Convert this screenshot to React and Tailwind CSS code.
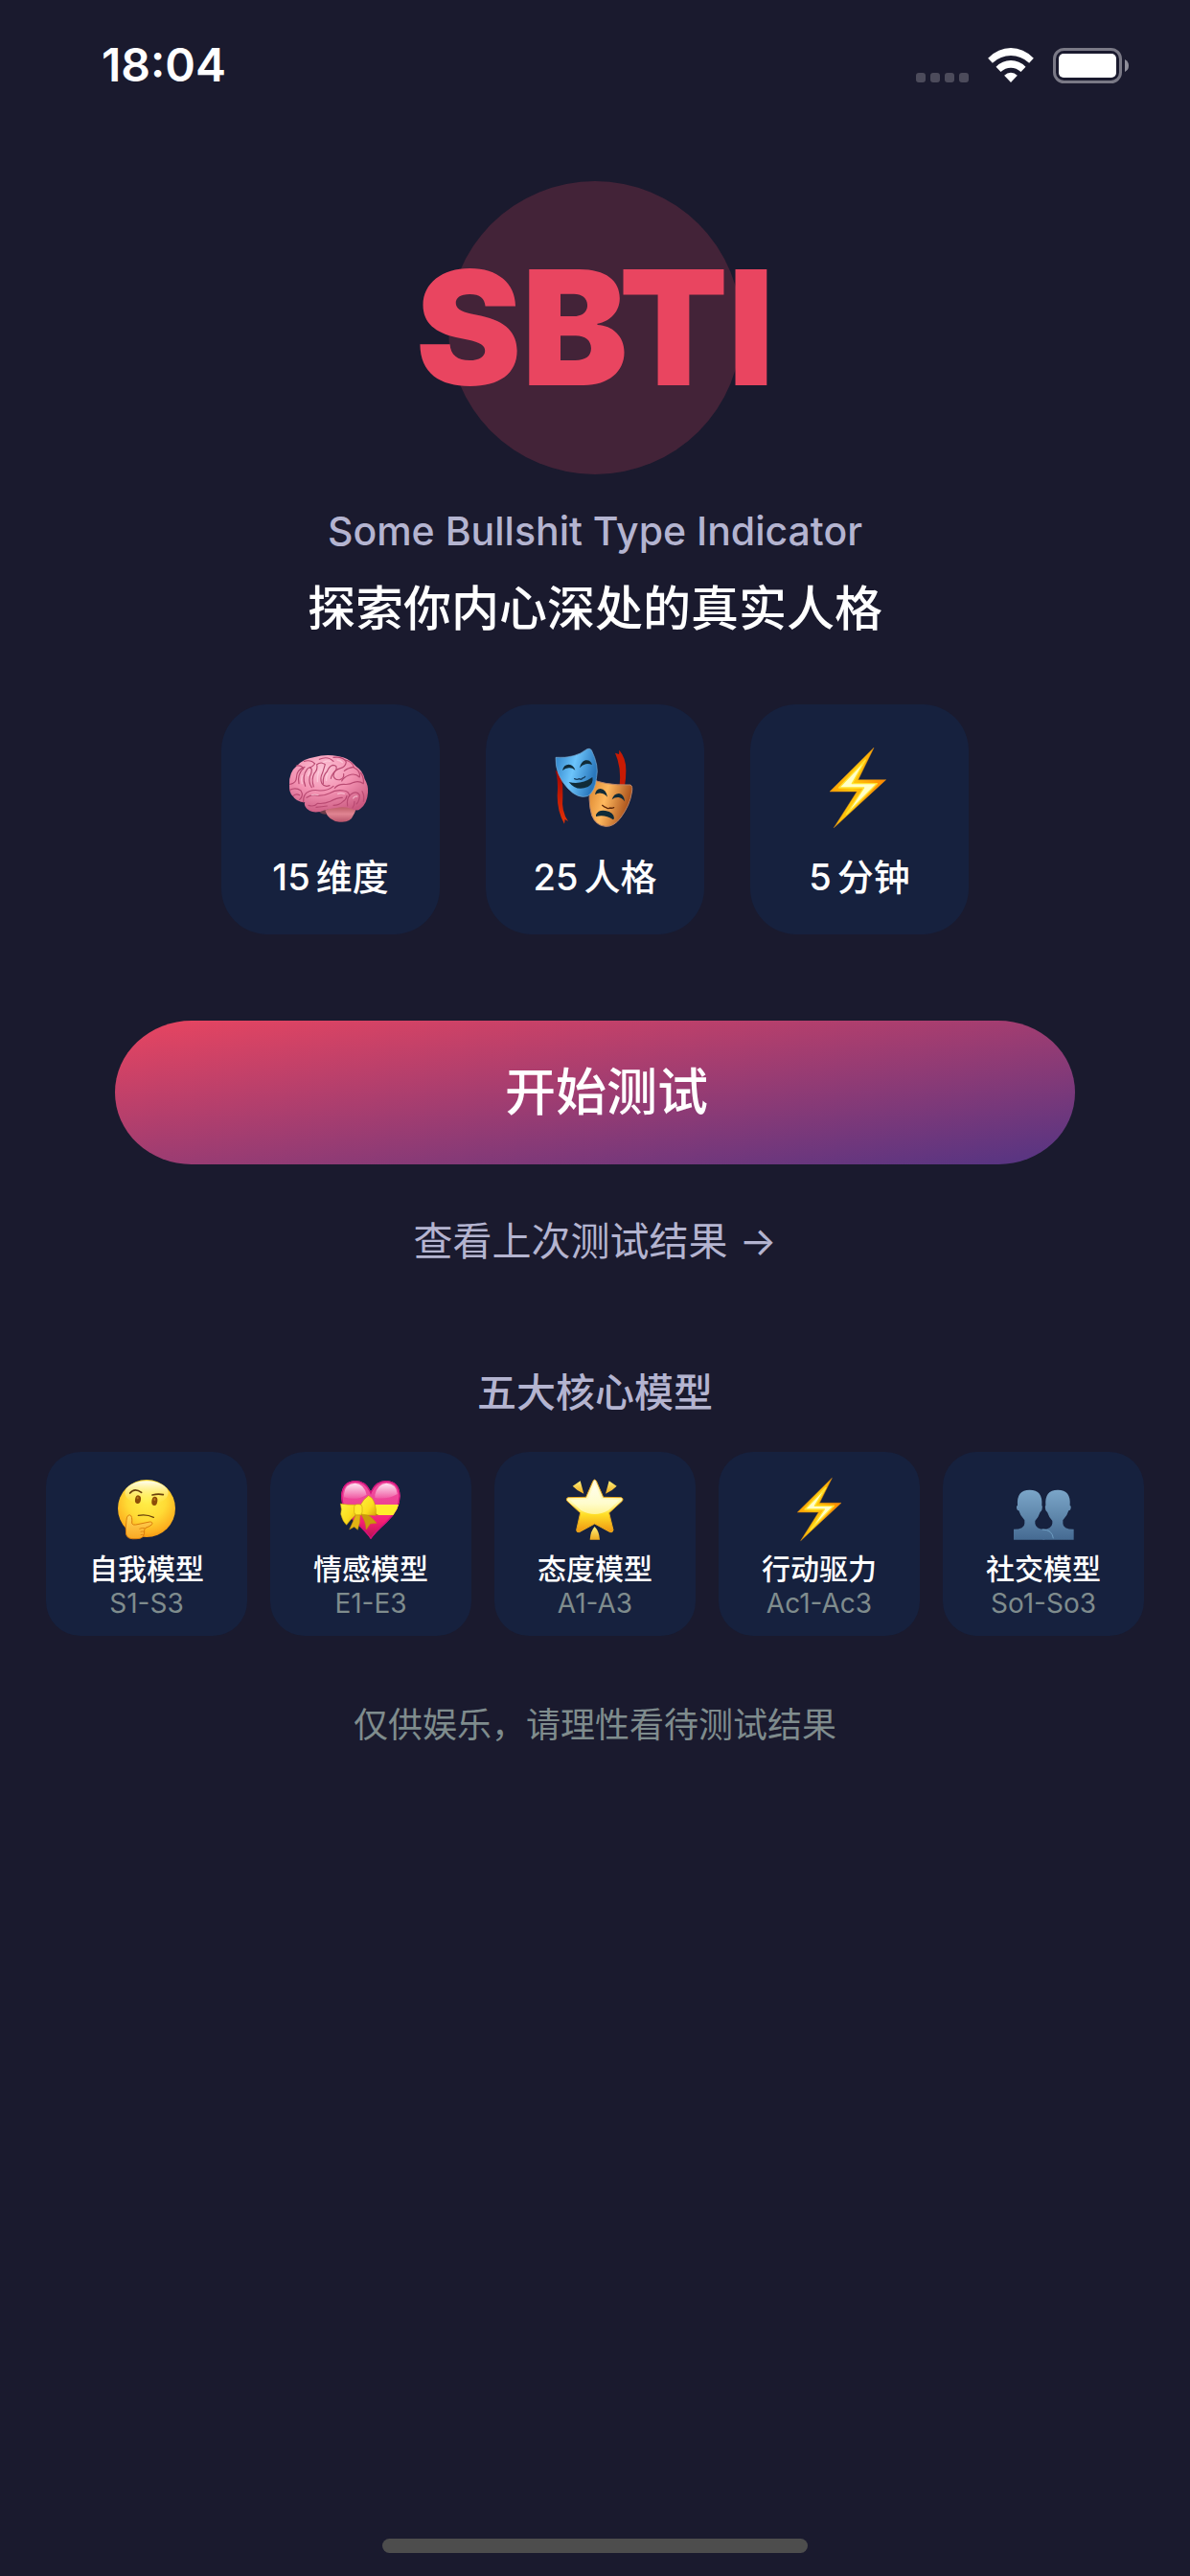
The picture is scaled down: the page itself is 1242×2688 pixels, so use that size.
const font = "font-['Inter','Noto_Sans_CJK_SC',sans-serif]";

function BrainIcon() {
  return (
    <svg viewBox="231 168 288 288" className="size-24" aria-hidden="true">
      <defs>
        <radialGradient id="brainBody" cx="0.42" cy="0.25" r="0.8">
          <stop offset="0" stopColor="#fcc3d6" />
          <stop offset="0.5" stopColor="#f392b2" />
          <stop offset="1" stopColor="#c9587f" />
        </radialGradient>
        <linearGradient id="brainStem" x1="0" y1="0" x2="0" y2="1">
          <stop offset="0" stopColor="#b6565f" />
          <stop offset="0.5" stopColor="#e08492" />
          <stop offset="1" stopColor="#b8546b" />
        </linearGradient>
      </defs>
      <path d="M340 386q16 10 28 4l14 -10l-20 -8z" fill="#6d3b48" />
      <path d="M358 380q10 32 45 36q34 4 44 -22q8 -14 6 -20q-50 -18 -86 2z" fill="url(#brainStem)" />
      <path d="M246 300q-2 -40 24 -60q20 -22 55 -27q34 -10 72 -3q36 4 58 32q22 14 27 40q12 20 10 42q-2 34 -23 50q-10 10 -26 2q-24 -10 -50 -4q-32 4 -50 12q-34 6 -46 -14q-6 -10 -2 -15q-28 -2 -38 -20q-12 -8 -11 -35z" fill="url(#brainBody)" />
      <g fill="none" stroke="#b94a72" strokeWidth="3.5" strokeLinecap="round" strokeLinejoin="round">
        <path d="M248 298q20 -4 20 -20q0 -26 26 -34" />
        <path d="M268 240q18 -2 22 10M292 226q22 -6 34 8q-8 10 -16 12" />
        <path d="M276 296q-6 -28 14 -48M296 304q-12 -30 6 -54q10 -10 14 2q0 14 -6 22q-4 20 6 34" />
        <path d="M322 306q-8 -24 2 -42q12 -12 8 -28q14 -10 26 0q-4 14 -8 26q-10 20 -2 34q8 12 24 6" />
        <path d="M352 296q-2 -24 12 -38q6 -16 18 -20q16 0 10 16q-14 14 -16 26" />
        <path d="M340 220q26 -12 44 6M384 214q30 -4 40 14q-2 16 -18 20q-22 6 -22 24q4 14 20 12q14 -4 12 -18" />
        <path d="M420 222q22 4 28 22q-18 2 -30 12M448 246q22 10 18 30q-14 -14 -34 -6q-16 6 -22 18" />
        <path d="M470 262q10 16 8 34q-14 -10 -30 -4q-14 8 -32 6q-18 0 -28 12" />
        <path d="M248 316q18 -10 34 2q10 16 -4 28M258 334q10 -8 20 -2M290 354q-2 -26 18 -34q16 -6 34 -2q26 0 42 -14" />
        <path d="M300 340q16 -12 36 -6q20 0 36 -8q20 -12 44 -8q18 2 18 18" />
        <path d="M306 364q18 6 28 -6q22 2 40 -6q20 -12 38 -12M330 370q18 -2 34 -4M384 364q18 0 30 -12q10 -6 12 -18" />
        <path d="M428 366q-4 -24 10 -36q18 -14 28 2q0 18 -10 28M444 372q6 -8 6 -20M474 320q8 14 4 32" />
      </g>
      <g fill="none" stroke="#ffdbe6" strokeWidth="4" strokeLinecap="round" opacity="0.6">
        <path d="M286 272q-4 14 0 24M309 258q-4 6 -5 14M338 258q-6 16 -4 32M366 264q-6 12 -4 22M396 222q12 2 16 8M352 230q10 -8 22 -4M316 332q10 -3 20 0M398 328q10 -4 20 0M446 342q4 -8 12 -6" />
      </g>
    </svg>
  );
}

function MasksIcon() {
  return (
    <svg viewBox="1059 168 288 288" className="size-24" aria-hidden="true">
      <defs>
        <linearGradient id="maskBlue" x1="0" y1="0" x2="1" y2="0.3">
          <stop offset="0" stopColor="#2b7ec4" />
          <stop offset="0.5" stopColor="#6cc4fb" />
          <stop offset="1" stopColor="#2a78bd" />
        </linearGradient>
        <linearGradient id="maskOrange" x1="0" y1="0" x2="1" y2="0.3">
          <stop offset="0" stopColor="#d9822b" />
          <stop offset="0.45" stopColor="#ffb95e" />
          <stop offset="1" stopColor="#a9501a" />
        </linearGradient>
        <linearGradient id="maskRibbon" x1="0" y1="0" x2="0" y2="1">
          <stop offset="0" stopColor="#9d0503" />
          <stop offset="1" stopColor="#e63206" />
        </linearGradient>
      </defs>
      <path d="M1079 254q10 30 6 80q0 50 22 88l2 -14l10 6q-22 -32 -17 -76q2 -36 -6 -70z" fill="url(#maskRibbon)" />
      <path d="M1280 304q6 -60 -14 -104l12 4l1 -13q22 26 21 64q0 26 -4 50z" fill="#c81b04" />
      <path d="M1190 280q40 22 124 20q8 4 4 24q-6 40 -34 78q-22 30 -48 28q-30 -2 -43 -34q-14 -46 -3 -116z" fill="url(#maskOrange)" stroke="#b98368" strokeWidth="3" />
      <path d="M1080 214q60 4 98 -26q8 -4 14 3q24 50 16 84q-4 46 -28 60q-30 10 -62 -24q-40 -42 -38 -97z" fill="url(#maskBlue)" stroke="#79aed6" strokeWidth="2" />
      <g fill="#102b38">
        <path d="M1101 255q4 -19 20 -19q15 1 20 18q-11 -9 -20 -7q-11 1 -20 8zM1155 247q4 -20 18 -24q16 -3 21 14q-12 -5 -20 -2q-12 3 -19 12z" />
        <path d="M1121 291q38 10 74 -15q4 20 -14 30q-36 16 -60 -15z" />
        <path d="M1203 331q2 -18 17 -19q18 2 22 26q-10 -12 -21 -12q-10 -1 -18 5zM1256 346q6 -19 22 -19q16 2 18 25q-9 -12 -19 -13q-12 -1 -21 7z" />
        <path d="M1206 393q8 -16 30 -12q26 4 27 24l-3 4q-26 -18 -54 -10z" />
      </g>
      <g fill="none" strokeLinecap="round" strokeWidth="4">
        <path d="M1139 281q8 4 14 0q8 4 11 -2q6 0 8 -5" stroke="#153c5d" />
        <path d="M1226 364q6 6 12 7q6 5 12 1q6 2 12 -1" stroke="#5c2709" />
      </g>
    </svg>
  );
}

function BoltIcon({ viewBox, className, points, inner, id }) {
  return (
    <svg viewBox={viewBox} className={className} aria-hidden="true">
      <defs>
        <linearGradient id={id} x1="0" y1="0" x2="1" y2="0.25">
          <stop offset="0" stopColor="#ff9300" />
          <stop offset="0.5" stopColor="#ffc70a" />
          <stop offset="1" stopColor="#ff8a00" />
        </linearGradient>
      </defs>
      <polygon points={points} fill={`url(#${id})`} stroke="#d98a18" strokeWidth="1.5" strokeLinejoin="round" />
      <polygon points={inner} fill="#ffffc8" stroke="#ffe22e" strokeWidth="4" strokeLinejoin="round" />
    </svg>
  );
}

function LargeBolt() {
  return (
    <BoltIcon
      id="boltLarge"
      viewBox="687 168 288 288"
      className="size-24"
      points="876,184 738,321 823,321 751,434 914,284 827,284"
      inner="850,222 767,309 845,309 790,392 886,296 808,296"
    />
  );
}

function SmallBolt() {
  return (
    <BoltIcon
      id="boltSmall"
      viewBox="237 120 216 216"
      className="size-[72px]"
      points="385,130 277,237 343,237 287,326 414,208 346,208"
      inner="366,160 300,228 361,228 318,292 391,217 331,217"
    />
  );
}

function ThinkingIcon() {
  return (
    <svg viewBox="261 420 216 216" className="size-[72px]" aria-hidden="true">
      <defs>
        <radialGradient id="faceFill" cx="0.5" cy="0.35" r="0.68">
          <stop offset="0" stopColor="#fff04a" />
          <stop offset="0.5" stopColor="#ffdb35" />
          <stop offset="0.85" stopColor="#fdb01f" />
          <stop offset="1" stopColor="#f0900e" />
        </radialGradient>
        <linearGradient id="faceShine" x1="0" y1="0" x2="0" y2="1">
          <stop offset="0" stopColor="#fffef0" />
          <stop offset="1" stopColor="#fff36b" stopOpacity="0" />
        </linearGradient>
        <linearGradient id="handFill" x1="0" y1="0" x2="0" y2="1">
          <stop offset="0" stopColor="#ffd75a" />
          <stop offset="1" stopColor="#f9a823" />
        </linearGradient>
      </defs>
      <circle cx="369" cy="525" r="90" fill="url(#faceFill)" />
      <ellipse cx="369" cy="476" rx="68" ry="37" fill="url(#faceShine)" />
      <ellipse cx="342" cy="497" rx="9" ry="13" fill="#8d4d08" transform="rotate(10 342 497)" />
      <ellipse cx="394" cy="502" rx="9" ry="14" fill="#8d4d08" transform="rotate(8 394 502)" />
      <ellipse cx="341" cy="492" rx="3" ry="4" fill="#b97a1b" />
      <ellipse cx="394" cy="497" rx="3" ry="4" fill="#b97a1b" />
      <g fill="none" stroke="#69400c" strokeLinecap="round">
        <path d="M317 477q14 -18 36 -2" strokeWidth="5" />
        <path d="M387 483q18 -5 34 -1" strokeWidth="5" />
        <path d="M343 547q26 -5 48 6" strokeWidth="4" />
      </g>
      <path d="M306 562q1 -17 11 -16q8 2 6 26q4 6 12 4l44 -9q10 0 7 8q-6 6 -20 11q-6 4 -4 14q0 20 -24 20q-30 3 -33 -14q-3 -18 1 -44z" fill="url(#handFill)" stroke="#db7d0c" strokeWidth="3" strokeLinejoin="round" />
      <path d="M364 587q-10 -2 -18 2M362 598q-6 -2 -12 0M360 608q-6 -2 -10 0" fill="none" stroke="#db7d0c" strokeWidth="2.5" />
    </svg>
  );
}

function HeartIcon() {
  const heart = "M1071 622q-12 -20 -50 -54q-43 -38 -43 -82q3 -46 44 -48q34 0 49 34q15 -34 49 -34q41 2 43 48q0 44 -43 84q-38 34 -49 52z";
  return (
    <svg viewBox="963 420 216 216" className="size-[72px]" aria-hidden="true">
      <defs>
        <linearGradient id="heartFill" x1="0" y1="0" x2="0" y2="1">
          <stop offset="0" stopColor="#f04fa0" />
          <stop offset="0.4" stopColor="#ee4295" />
          <stop offset="0.7" stopColor="#f51f72" />
          <stop offset="1" stopColor="#b3124f" />
        </linearGradient>
        <linearGradient id="heartShine" x1="0" y1="0" x2="0" y2="1">
          <stop offset="0" stopColor="#fff" stopOpacity="0.85" />
          <stop offset="1" stopColor="#fff" stopOpacity="0.1" />
        </linearGradient>
        <linearGradient id="bowFill" x1="0" y1="0" x2="1" y2="1">
          <stop offset="0" stopColor="#fff23c" />
          <stop offset="0.6" stopColor="#fbdc1e" />
          <stop offset="1" stopColor="#d9a60c" />
        </linearGradient>
        <clipPath id="heartClip"><path d={heart} /></clipPath>
      </defs>
      <path d={heart} fill="url(#heartFill)" />
      <g clipPath="url(#heartClip)">
        <path d={heart} fill="none" stroke="#d3117c" strokeWidth="8" />
        <rect x="970" y="513" width="200" height="33" fill="#ffee2b" />
        <path d="M1084 540l12 6h-30z" fill="#b18305" />
      </g>
      <path d="M987 480q2 -32 35 -34q28 2 36 36q-30 20 -71 8zM1084 482q8 -34 36 -36q32 2 34 34q-30 18 -70 12z" fill="url(#heartShine)" />
      <g stroke="#c09009" strokeWidth="1.5" strokeLinejoin="round">
        <path d="M1024 545q-10 24 -20 46l15 -8l11 9q8 -20 8 -46z" fill="#e2b414" />
        <path d="M1040 543q16 24 17 48l12 -18l20 -2q-14 -20 -38 -32z" fill="#c99a0c" />
        <path d="M976 510q22 4 45 4l2 32q-14 12 -28 31q-12 -10 -18 -34q4 -16 -1 -33z" fill="url(#bowFill)" />
        <path d="M1040 512q8 -16 24 -27q14 6 19 24q6 18 4 38q-26 0 -46 -4z" fill="url(#bowFill)" />
        <rect x="1019" y="512" width="25" height="33" rx="9" fill="#ffe92e" />
      </g>
    </svg>
  );
}

function StarIcon() {
  return (
    <svg viewBox="255 420 216 216" className="size-[72px]" aria-hidden="true">
      <defs>
        <linearGradient id="starFill" x1="0" y1="0" x2="0" y2="1">
          <stop offset="0" stopColor="#fffbe0" />
          <stop offset="0.45" stopColor="#fff8a8" />
          <stop offset="0.66" stopColor="#ffdf27" />
          <stop offset="1" stopColor="#ef9512" />
        </linearGradient>
        <linearGradient id="starShine" x1="0" y1="0" x2="0" y2="1">
          <stop offset="0" stopColor="#fff" stopOpacity="0.6" />
          <stop offset="1" stopColor="#ffffd2" stopOpacity="0.65" />
        </linearGradient>
        <linearGradient id="rayFill" x1="0" y1="0" x2="0" y2="1">
          <stop offset="0" stopColor="#fff07a" />
          <stop offset="1" stopColor="#eea91d" />
        </linearGradient>
      </defs>
      <path d="M357 439q5 -8 10 0l22 51l56 1q8 2 4 10l-42 38l13 54q-2 9 -10 6l-48 -26l-48 26q-9 2 -9 -6l12 -54l-42 -38q-4 -8 4 -10l56 -1z" fill="url(#starFill)" stroke="#e9a91e" strokeWidth="3" strokeLinejoin="round" />
      <path d="M362 447l21 49l56 3l-34 32q-43 24 -86 0l-34 -32l56 -3z" fill="url(#starShine)" />
      <path d="M293 455l24 -16l11 40q-20 -8 -35 -24zM431 455l-24 -16l-11 40q20 -8 35 -24z" fill="url(#rayFill)" />
      <path d="M362 582q14 14 16 41h-31q2 -28 15 -41z" fill="url(#rayFill)" />
    </svg>
  );
}

function PeopleIcon() {
  const person = "M954 323v-33q34 0 34 -18v-10q-14 -14 -18 -30q-8 -2 -7 -14l3 -2q-4 -49 38 -49q42 0 38 49q3 2 0 14q-2 4 -5 6q-6 18 -16 28v8q2 18 30 18v33z";
  return (
    <svg viewBox="939 120 216 216" className="size-[72px]" aria-hidden="true">
      <defs>
        <linearGradient id="peopleFill" gradientUnits="userSpaceOnUse" x1="0" y1="166" x2="0" y2="324">
          <stop offset="0" stopColor="#7ba6c9" />
          <stop offset="0.5" stopColor="#6189ad" />
          <stop offset="1" stopColor="#456a92" />
        </linearGradient>
      </defs>
      <path d={person} fill="url(#peopleFill)" />
      <path d={person} fill="url(#peopleFill)" transform="matrix(-1 0 0 1 2096 0)" />
      <path d="M1043 291q32 0 35 28" fill="none" stroke="#7fb2d4" strokeWidth="2" />
    </svg>
  );
}

const stats = [
  { Icon: BrainIcon, count: '15', unit: '维度' },
  { Icon: MasksIcon, count: '25', unit: '人格' },
  { Icon: LargeBolt, count: '5', unit: '分钟' },
];

const models = [
  { Icon: ThinkingIcon, name: '自我模型', range: 'S1-S3' },
  { Icon: HeartIcon, name: '情感模型', range: 'E1-E3' },
  { Icon: StarIcon, name: '态度模型', range: 'A1-A3' },
  { Icon: SmallBolt, name: '行动驱力', range: 'Ac1-Ac3' },
  { Icon: PeopleIcon, name: '社交模型', range: 'So1-So3' },
];

function StatusBar() {
  return (
    <header className="flex h-[136px] items-center justify-between pr-16 pl-[106px]">
      <time className="text-[48px] leading-none font-semibold">18:04</time>
      <div className="flex items-center gap-5">
        <svg viewBox="0 0 55 37" className="h-[37px] w-[55px]" fill="#4c4b5b" role="img" aria-label="No signal">
          <rect x="0" y="26" width="10" height="10" rx="3" />
          <rect x="15" y="26" width="10" height="10" rx="3" />
          <rect x="30" y="26" width="10" height="10" rx="3" />
          <rect x="45" y="26" width="10" height="10" rx="3" />
        </svg>
        <svg viewBox="305 57 143 111" className="h-[37px] w-12" fill="#fff" role="img" aria-label="Wi-Fi">
          <path d="M305 89Q337 57 376.5 57Q416 57 448 89L434 104Q408 81 376.5 81Q345 81 319 104Z" />
          <path d="M330 116Q350 96 376.5 96Q403 96 423 116L408 132Q394 119 376.5 119Q359 119 345 132Z" />
          <path d="M356 143Q365 134 376.5 134Q388 134 397 143L376.5 165Z" />
        </svg>
        <svg viewBox="0 0 79 37" className="h-[37px] w-[79px]" role="img" aria-label="Battery full">
          <rect x="1.5" y="1.5" width="69" height="34" rx="10" fill="none" stroke="#7a7986" strokeWidth="3" />
          <rect x="6" y="6" width="60" height="25" rx="5" fill="#fff" />
          <path d="M75 12q4 2 4 6.5t-4 6.5z" fill="#8f8e9a" />
        </svg>
      </div>
    </header>
  );
}

export default function App() {
  return (
    <div className={`flex min-h-screen flex-col bg-[#1a1a2e] text-white ${font}`}>
      <StatusBar />
      <main className="flex flex-1 flex-col items-center px-12 pt-[53px]">
        <div className="flex size-[306px] items-center justify-center rounded-full bg-[#432338]">
          <h1 className="text-[166px] leading-none font-black text-[#e94560]">SBTI</h1>
        </div>
        <p className="mt-8 text-[41px] leading-[54px] font-medium text-[#b4b4d0]">Some Bullshit Type Indicator</p>
        <p className="mt-6 text-[50px] leading-[60px] font-medium">探索你内心深处的真实人格</p>

        <ul className="mt-[70px] flex gap-12">
          {stats.map(({ Icon, count, unit }) => (
            <li key={unit} className="flex w-[228px] flex-col items-center rounded-[48px] bg-[#16213e] pt-10 pb-9">
              <Icon />
              <p className="mt-5 flex gap-1.5 text-[38px] leading-[48px] font-medium">
                <span>{count}</span>
                <span>{unit}</span>
              </p>
            </li>
          ))}
        </ul>

        <div className="mt-[90px] w-full px-[72px]">
          <button
            type="button"
            className="h-[150px] w-full rounded-[80px/75px] bg-linear-to-br/srgb from-[#e94560] to-[#533483] pl-6 text-[53px] leading-none font-medium"
          >
            开始测试
          </button>
        </div>
        <a href="#last-result" className="mt-[50px] flex gap-3 text-[41px] leading-[60px] text-[#b4b4d0]">
          <span>查看上次测试结果</span>
          <span>→</span>
        </a>

        <section className="mt-[98px] w-full">
          <h2 className="text-center text-[41px] leading-[60px] font-medium text-[#b4b4d0]">五大核心模型</h2>
          <ul className="mt-8 grid grid-cols-5 gap-6">
            {models.map(({ Icon, name, range }) => (
              <li key={name} className="flex flex-col items-center rounded-[36px] bg-[#16213e] pt-6 pb-4">
                <Icon />
                <span className="mt-2 text-[30px] leading-9 font-medium">{name}</span>
                <span className="text-[28px] leading-9 text-[#7f8c8d]">{range}</span>
              </li>
            ))}
          </ul>
        </section>
        <p className="mt-[66px] text-[36px] leading-[54px] text-[#7f8c8d]">仅供娱乐，请理性看待测试结果</p>
      </main>
      <footer className="flex justify-center pb-6">
        <div className="h-[15px] w-[444px] rounded-full bg-[#4d4d4d]" />
      </footer>
    </div>
  );
}
